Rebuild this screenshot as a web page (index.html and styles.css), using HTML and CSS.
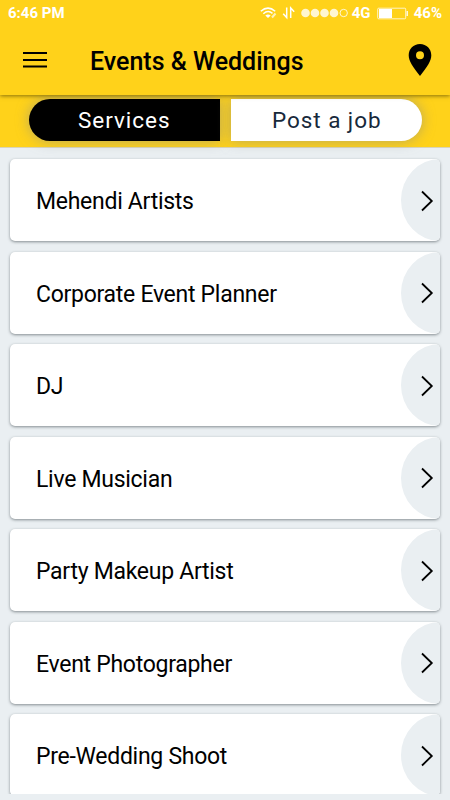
FILE: index.html
```html
<!DOCTYPE html>
<html lang="en">
<head>
<meta charset="utf-8">
<title>Events &amp; Weddings</title>
<link rel="stylesheet" href="styles.css">
</head>
<body>
<svg class="defs" width="0" height="0" aria-hidden="true">
  <symbol id="chevron" viewBox="0 0 14 24"><path d="M2 2.500 11.800 12 2 21.500" fill="none" stroke="#000" stroke-width="1.8"/></symbol>
</svg>
<header class="header">
  <div class="status">
    <span class="time">6:46 PM</span>
    <svg class="signals" width="90" height="14" viewBox="0 0 90 14">
      <g fill="none" stroke="#fff" stroke-width="1.5">
        <path d="M.8 5.200Q8 -1 15.200 5.200M3.300 7.700Q8 3.700 12.500 7.300"/>
        <path d="M12 11.500l3.500-4" stroke-width="2" opacity=".7"/>
        <path d="M26.700 1.500v10l-3.500-3.700M30.700 12v-10l3.500 3.700"/>
      </g>
      <path d="M5.300 9.500Q8 7.500 10.700 9.500L8 12z" fill="#fff"/>
      <g fill="#fff" opacity=".8"><circle cx="45.500" cy="7" r="4.300"/><circle cx="55" cy="7" r="4.300"/><circle cx="64.500" cy="7" r="4.300"/><circle cx="74" cy="7" r="4.300"/></g>
      <circle cx="83.700" cy="7" r="3.700" fill="none" stroke="#fff" opacity=".8"/>
    </svg>
    <span class="network">4G</span>
    <svg class="battery" width="32" height="13" viewBox="0 0 32 13">
      <rect x=".7" y="1.200" width="28" height="10.600" rx="1" fill="none" stroke="#fff" opacity=".75"/>
      <path d="M2 2h13v9H2z" fill="#fff"/><path d="M29.500 4h1.500v5h-1.500z" fill="#fff" opacity=".85"/>
    </svg>
    <span class="percent">46%</span>
  </div>
  <div class="toolbar">
    <svg class="menu" width="24" height="18" viewBox="0 0 24 18"><path d="M0 2h24M0 9h24M0 15.500h24" stroke="#000" stroke-width="2"/></svg>
    <h1 class="title">Events &amp; Weddings</h1>
    <svg class="pin" width="24" height="32" viewBox="0 0 24 32"><path fill="#000" fill-rule="evenodd" d="M12 0C5.400 0 .7 5 .7 11.200.7 17 5 23 12 32c7-9 11.300-15 11.300-20.800C23.300 5 18.600 0 12 0zm0 7.200a4 4 0 1 1 0 8 4 4 0 0 1 0-8z"/></svg>
  </div>
</header>
<nav class="tabs">
  <div class="tab tab-services"><span>Services</span></div>
  <div class="tab tab-post"><span>Post a job</span></div>
</nav>
<main class="list">
  <div class="card"><span>Mehendi Artists</span><div class="go"><svg class="chevron"><use href="#chevron"/></svg></div></div>
  <div class="card"><span>Corporate Event Planner</span><div class="go"><svg class="chevron"><use href="#chevron"/></svg></div></div>
  <div class="card"><span>DJ</span><div class="go"><svg class="chevron"><use href="#chevron"/></svg></div></div>
  <div class="card"><span>Live Musician</span><div class="go"><svg class="chevron"><use href="#chevron"/></svg></div></div>
  <div class="card"><span>Party Makeup Artist</span><div class="go"><svg class="chevron"><use href="#chevron"/></svg></div></div>
  <div class="card"><span>Event Photographer</span><div class="go"><svg class="chevron"><use href="#chevron"/></svg></div></div>
  <div class="card"><span>Pre-Wedding Shoot</span><div class="go"><svg class="chevron"><use href="#chevron"/></svg></div></div>
</main>
</body>
</html>
```
FILE: styles.css
```css
* { box-sizing: border-box; }
body { margin: 0; height: 800px; overflow: hidden; background: #eaeff2; font-family: Roboto, sans-serif; color: #000; }
.defs { display: block; }
.header { position: relative; z-index: 1; height: 95px; background: #ffd21a; box-shadow: 0 1px 4px rgba(70, 60, 0, .65); }
.status { height: 26px; display: flex; align-items: center; color: #fff; padding: 0 8px 0; font-size: 15px; font-weight: 700; white-space: nowrap; }
.time { width: 252px; }
.signals { flex: none; }
.network { margin-left: 2px; width: 24px; }
.battery { flex: none; margin-left: 1px; }
.percent { margin-left: 5px; }
.toolbar { height: 68px; display: flex; align-items: center; padding: 0 18px 0 23px; }
.menu { flex: none; }
.title { margin: 3px 0 0 43px; flex: 1; font-size: 25px; line-height: 32px; font-weight: 500; white-space: nowrap; }
.pin { flex: none; }
.tabs { height: 53px; display: flex; gap: 11px; padding: 4px 28px 6px 29px; background: #ffd21a; border-bottom: 1px solid #d9d4b8; }
.tab { flex: 1; height: 42px; display: flex; align-items: center; justify-content: center; font-size: 22.5px; letter-spacing: .95px; box-shadow: 0 0 13px rgba(145, 145, 130, .65); white-space: nowrap; }
.tab-services { background: #000; color: #fff; border-radius: 21px 0 0 21px; }
.tab-post { padding-left: 1px; background: #fff; color: #17293b; border-radius: 0 21px 21px 0; }
.list { height: 646px; padding: 11px 10px 0; display: flex; flex-direction: column; gap: 10.5px; overflow: hidden; }
.card { flex: none; height: 82px; display: flex; align-items: center; justify-content: space-between; padding-left: 26px; overflow: hidden; border-radius: 5px; background: #fff; font-size: 23px; letter-spacing: -.28px; line-height: 30px; white-space: nowrap; box-shadow: 0 1px 3px rgba(65, 75, 80, .6); }
.card span { padding-top: 4px; }
.go { width: 39px; height: 82px; display: flex; align-items: center; justify-content: flex-end; padding: 1px 6px 0 0; border-radius: 39px 0 0 39px / 41px 0 0 41px; background: #eaeff2; }
.chevron { width: 14px; height: 24px; }
```
